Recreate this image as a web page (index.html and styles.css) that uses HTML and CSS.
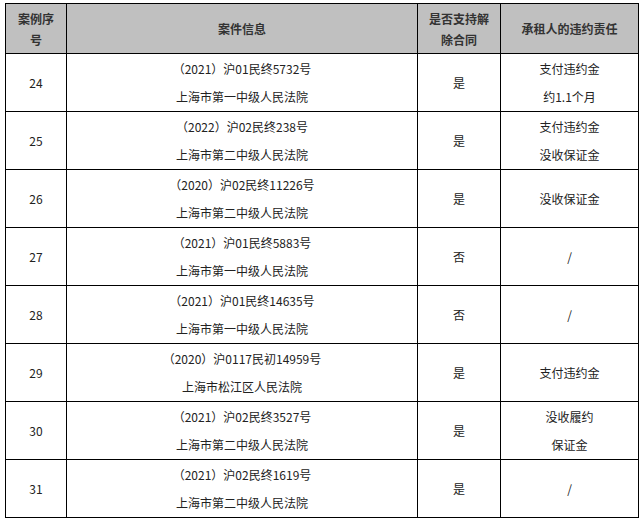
FILE: index.html
```html
<!DOCTYPE html>
<html lang="zh">
<head>
<meta charset="utf-8">
<link rel="stylesheet" href="styles.css">
</head>
<body>
<table class="cases">
  <colgroup>
    <col class="c-no"><col class="c-info"><col class="c-cancel"><col class="c-duty">
  </colgroup>
  <thead>
    <tr>
      <th>案例序<br>号</th>
      <th>案件信息</th>
      <th>是否支持解<br>除合同</th>
      <th>承租人的违约责任</th>
    </tr>
  </thead>
  <tbody>
    <tr>
      <td>24</td>
      <td>（2021）沪01民终5732号<br>上海市第一中级人民法院</td>
      <td>是</td>
      <td>支付违约金<br>约1.1个月</td>
    </tr>
    <tr>
      <td>25</td>
      <td>（2022）沪02民终238号<br>上海市第二中级人民法院</td>
      <td>是</td>
      <td>支付违约金<br>没收保证金</td>
    </tr>
    <tr>
      <td>26</td>
      <td>（2020）沪02民终11226号<br>上海市第二中级人民法院</td>
      <td>是</td>
      <td>没收保证金</td>
    </tr>
    <tr>
      <td>27</td>
      <td>（2021）沪01民终5883号<br>上海市第一中级人民法院</td>
      <td>否</td>
      <td>/</td>
    </tr>
    <tr>
      <td>28</td>
      <td>（2021）沪01民终14635号<br>上海市第一中级人民法院</td>
      <td>否</td>
      <td>/</td>
    </tr>
    <tr>
      <td>29</td>
      <td>（2020）沪0117民初14959号<br>上海市松江区人民法院</td>
      <td>是</td>
      <td>支付违约金</td>
    </tr>
    <tr>
      <td>30</td>
      <td>（2021）沪02民终3527号<br>上海市第二中级人民法院</td>
      <td>是</td>
      <td>没收履约<br>保证金</td>
    </tr>
    <tr>
      <td>31</td>
      <td>（2021）沪02民终1619号<br>上海市第二中级人民法院</td>
      <td>是</td>
      <td>/</td>
    </tr>
  </tbody>
</table>
</body>
</html>
```

FILE: styles.css
```css
html, body {
  margin: 0;
  background: #ffffff;
}
body {
  padding: 3px 5px;
  font-family: "Noto Sans CJK SC", "Noto Sans", sans-serif;
  font-size: 12px;
  color: #222222;
}
.cases {
  border-collapse: collapse;
  table-layout: fixed;
  width: 633px;
}
.c-no { width: 61px; }
.c-info { width: 351px; }
.c-cancel { width: 83px; }
.c-duty { width: 138px; }
.cases th, .cases td {
  border: 1px solid #000000;
  text-align: center;
  vertical-align: middle;
  padding: 0;
}
.cases th {
  background: #c0c0c0;
  font-weight: bold;
  line-height: 21px;
  height: 49px;
  color: #333333;
}
.cases td {
  line-height: 28px;
  height: 57px;
}
```
